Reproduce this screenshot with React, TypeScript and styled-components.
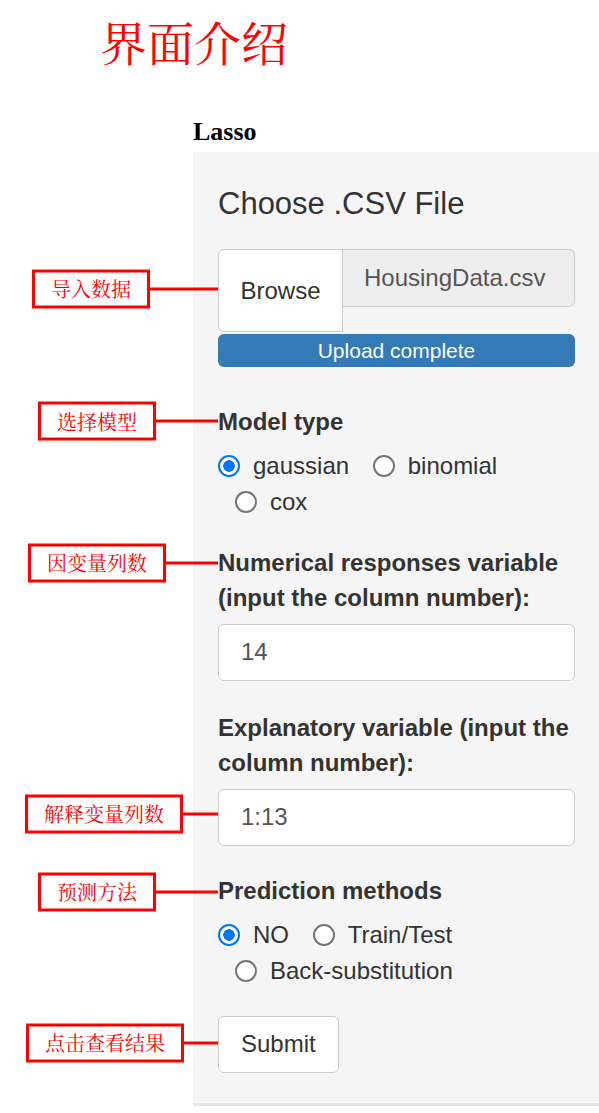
import React from "react";
import styled, { createGlobalStyle } from "styled-components";

const GlobalStyle = createGlobalStyle`
  html, body { margin: 0; padding: 0; background: #fff; }
  body { font-family: "Liberation Sans", Arial, sans-serif; color: #333; }
  *, *::before, *::after { box-sizing: border-box; }
`;

const CJK = `"Noto Serif CJK SC", "Noto Sans CJK SC", serif`;

const PageTitle = styled.h1`
  margin: 0;
  padding: 18px 0 0 100px;
  font-family: ${CJK};
  font-size: 47px;
  line-height: 46px;
  font-weight: 400;
  color: #ff0000;
`;

const Main = styled.main`
  margin: 53px 0 0 193px;
`;

const AppName = styled.h2`
  margin: 0 0 5px;
  font-family: "Liberation Serif", "Times New Roman", serif;
  font-weight: 700;
  font-size: 26px;
  line-height: 30px;
  color: #000;
`;

const Panel = styled.section`
  background: #f5f5f5;
  padding: 35px 24px 30.5px 25px;
  border-bottom: 3px solid #e6e6e6;
`;

const PanelHeading = styled.h3`
  margin: 0 0 28px;
  font-size: 31px;
  line-height: 34px;
  font-weight: 400;
  color: #333;
`;

const FileGroup = styled.div`
  position: relative;
  display: flex;
  align-items: flex-start;
`;

const BrowseButton = styled.div`
  width: 125px;
  height: 83px;
  flex: none;
  display: flex;
  align-items: center;
  justify-content: center;
  background: #fff;
  border: 1px solid #ccc;
  border-radius: 6px 0 0 6px;
  font-size: 24px;
  color: #333;
`;

const FileName = styled.div`
  flex: 1;
  height: 58px;
  display: flex;
  align-items: center;
  padding-left: 21px;
  background: #eee;
  border: 1px solid #ccc;
  border-left: 0;
  border-radius: 0 6px 6px 0;
  font-size: 24px;
  color: #555;
`;

const Progress = styled.div`
  margin: 2px 0 36.5px;
  height: 33px;
  border-radius: 6px;
  background: #337ab7;
  color: #fff;
  font-size: 21px;
  line-height: 33px;
  text-align: center;
`;

const FormGroup = styled.div<{ $gap?: number }>`
  margin-bottom: ${(p) => p.$gap ?? 27}px;
`;

const FieldLabel = styled.div`
  position: relative;
  font-weight: 700;
  font-size: 24px;
  line-height: 35px;
  margin-bottom: 9px;
  color: #333;
`;

const RadioGroup = styled.div`
  font-size: 24px;
  line-height: 36px;
`;

const RadioOption = styled.span`
  display: inline-flex;
  align-items: center;
  gap: 13px;
  height: 36px;
  vertical-align: top;
  white-space: nowrap;
  color: #333;
  & + & {
    margin-left: 17px;
  }
`;

const RadioDot = styled.span<{ $checked?: boolean }>`
  width: 22px;
  height: 22px;
  flex: none;
  border-radius: 50%;
  border: 2px solid ${(p) => (p.$checked ? "#0075ff" : "#767676")};
  background: ${(p) =>
    p.$checked
      ? "radial-gradient(circle, #0075ff 0 5.5px, #fff 6px)"
      : "#fff"};
`;

const Anchor = styled.div`
  position: relative;
`;

const TextInput = styled.input`
  display: block;
  width: 100%;
  height: 57px;
  padding: 0 22px;
  background: #fff;
  border: 1px solid #ccc;
  border-radius: 6px;
  font-family: "Liberation Sans", Arial, sans-serif;
  font-size: 24px;
  color: #555;
  outline: none;
`;

const SubmitButton = styled.button`
  height: 57px;
  padding: 0 22px;
  background: #fff;
  border: 1px solid #ccc;
  border-radius: 6px;
  font-family: "Liberation Sans", Arial, sans-serif;
  font-size: 24px;
  color: #333;
`;

const Callout = styled.div<{ $y: number }>`
  position: absolute;
  right: 100%;
  top: ${(p) => p.$y}px;
  transform: translateY(-50%);
  display: flex;
  align-items: center;
  pointer-events: none;
`;

const CalloutBox = styled.span`
  height: 39px;
  padding: 0 16px;
  display: flex;
  align-items: center;
  border: 3px solid #ff0000;
  background: #fff;
  font-family: ${CJK};
  font-size: 20px;
  font-weight: 400;
  line-height: 1;
  color: #ff0000;
  white-space: nowrap;
`;

const CalloutLine = styled.span<{ $len: number }>`
  width: ${(p) => p.$len}px;
  height: 3px;
  background: #ff0000;
`;

function Note({ text, y, len }: { text: string; y: number; len: number }) {
  return (
    <Callout $y={y}>
      <CalloutBox>{text}</CalloutBox>
      <CalloutLine $len={len} />
    </Callout>
  );
}

function Radios({ options, checked }: { options: string[]; checked: string }) {
  return (
    <RadioGroup>
      {options.map((o, i) => (
        <React.Fragment key={o}>
          {i > 0 ? " " : null}
          <RadioOption>
            <RadioDot $checked={o === checked} />
            {o}
          </RadioOption>
        </React.Fragment>
      ))}
    </RadioGroup>
  );
}

export default function App() {
  return (
    <>
      <GlobalStyle />
      <PageTitle>界面介绍</PageTitle>
      <Main>
        <AppName>Lasso</AppName>
        <Panel>
          <PanelHeading>Choose .CSV File</PanelHeading>
          <FileGroup>
            <Note text="导入数据" y={39.5} len={68} />
            <BrowseButton>Browse</BrowseButton>
            <FileName>HousingData.csv</FileName>
          </FileGroup>
          <Progress>Upload complete</Progress>

          <FormGroup $gap={25}>
            <FieldLabel>
              <Note text="选择模型" y={17.5} len={62} />
              Model type
            </FieldLabel>
            <Radios options={["gaussian", "binomial", "cox"]} checked="gaussian" />
          </FormGroup>

          <FormGroup $gap={29}>
            <FieldLabel>
              <Note text="因变量列数" y={18} len={52} />
              Numerical responses variable (input the column number):
            </FieldLabel>
            <TextInput defaultValue="14" />
          </FormGroup>

          <FormGroup>
            <FieldLabel>Explanatory variable (input the column number):</FieldLabel>
            <Anchor>
              <Note text="解释变量列数" y={25} len={35} />
              <TextInput defaultValue="1:13" />
            </Anchor>
          </FormGroup>

          <FormGroup>
            <FieldLabel>
              <Note text="预测方法" y={19} len={62} />
              Prediction methods
            </FieldLabel>
            <Radios options={["NO", "Train/Test", "Back-substitution"]} checked="NO" />
          </FormGroup>

          <Anchor>
            <Note text="点击查看结果" y={27} len={34} />
            <SubmitButton>Submit</SubmitButton>
          </Anchor>
        </Panel>
      </Main>
    </>
  );
}
